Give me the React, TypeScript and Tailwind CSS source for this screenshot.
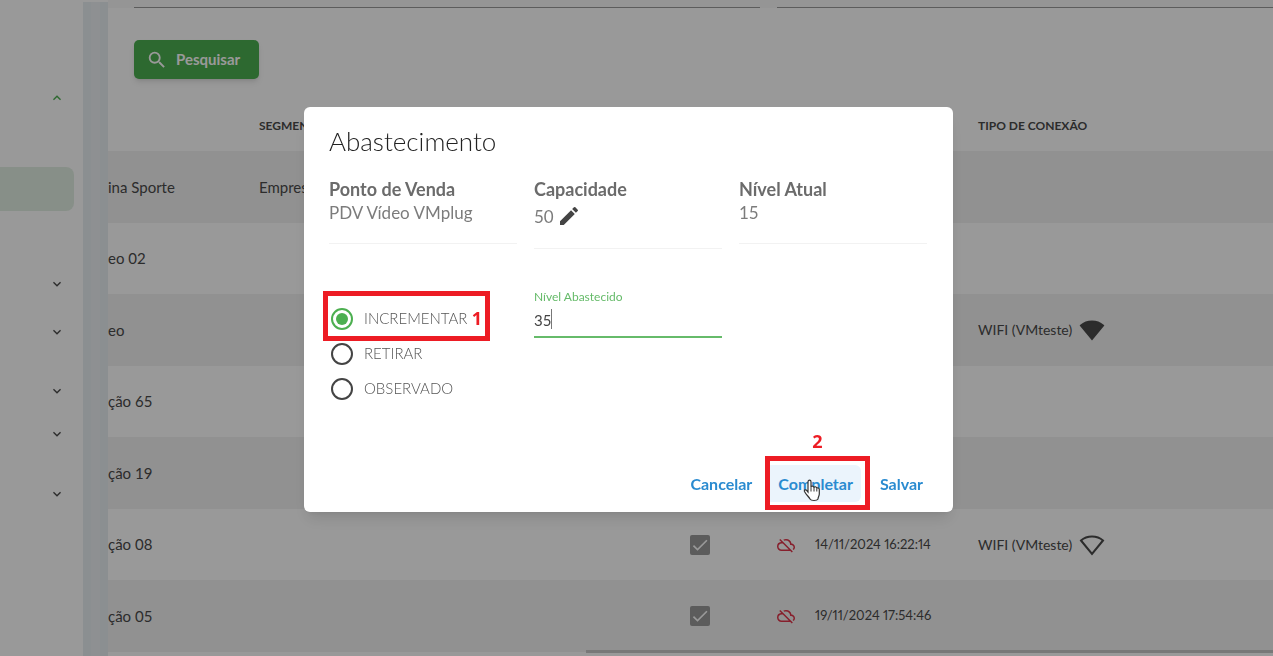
import { useState } from "react";
import {
  MdCheck,
  MdEdit,
  MdExpandLess,
  MdExpandMore,
  MdOutlineCloudOff,
  MdSearch,
} from "react-icons/md";

interface Maquina {
  id: number;
  nome: string;
  segmento?: string;
  telemetria?: string;
  conexao?: string;
  sinal?: "forte" | "fraco";
}

const maquinas: Maquina[] = [
  { id: 1, nome: "ina Sporte", segmento: "Empresa" },
  { id: 2, nome: "eo 02" },
  { id: 3, nome: "eo", conexao: "WIFI (VMteste)", sinal: "forte" },
  { id: 4, nome: "ção 65" },
  { id: 5, nome: "ção 19" },
  {
    id: 6,
    nome: "ção 08",
    telemetria: "14/11/2024 16:22:14",
    conexao: "WIFI (VMteste)",
    sinal: "fraco",
  },
  { id: 7, nome: "ção 05", telemetria: "19/11/2024 17:54:46" },
];

const operacoes = ["INCREMENTAR", "RETIRAR", "OBSERVADO"];

function SinalWifi({ cheio }: { cheio: boolean }) {
  return (
    <svg width="26" height="22" viewBox="0 0 26 22" className="shrink-0">
      <path
        d="M2 6.5C5 3.8 9 2.5 13 2.5S21 3.8 24 6.5L13 20Z"
        fill={cheio ? "#4a4a4a" : "none"}
        stroke="#4a4a4a"
        strokeWidth="2"
      />
    </svg>
  );
}

function Sidebar() {
  return (
    <nav className="flex w-[83px] shrink-0 flex-col bg-white pt-[74px] text-[#4a4a4a]">
      <button aria-label="Recolher menu" className="flex h-12 items-center pl-[49px] text-[#4caf50]">
        <MdExpandLess size={16} />
      </button>
      <a href="#" aria-label="Abastecimento" className="mt-[45px] mb-[49px] mr-[9px] h-11 rounded-r-lg bg-[#e2efe3]" />
      <button aria-label="Expandir menu 1" className="flex h-12 items-center pl-[49px]">
        <MdExpandMore size={16} />
      </button>
      <button aria-label="Expandir menu 2" className="mb-[11px] flex h-12 items-center pl-[49px]">
        <MdExpandMore size={16} />
      </button>
      <button aria-label="Expandir menu 3" className="flex h-12 items-center pl-[49px]">
        <MdExpandMore size={16} />
      </button>
      <button aria-label="Expandir menu 4" className="mb-[22px] flex h-[38px] items-center pl-[49px]">
        <MdExpandMore size={16} />
      </button>
      <button aria-label="Expandir menu 5" className="flex h-[38px] items-center pl-[49px]">
        <MdExpandMore size={16} />
      </button>
    </nav>
  );
}

function TabelaMaquinas() {
  return (
    <table className="w-full table-fixed text-left text-[15px] text-[#4a4a4a]">
      <colgroup>
        <col className="w-[151px]" />
        <col />
        <col className="w-[87px]" />
        <col className="w-[38px]" />
        <col className="w-[163px]" />
        <col className="w-[293px]" />
        <col className="w-[2px]" />
      </colgroup>
      <thead>
        <tr className="h-[51px] text-xs">
          <td />
          <th>SEGMENTO</th>
          <td />
          <td />
          <td />
          <th>TIPO DE CONEXÃO</th>
          <td />
        </tr>
      </thead>
      <tbody>
        {maquinas.map((item) => (
          <tr key={item.id} className="h-[71px] odd:h-[72px] odd:bg-[#f2f2f2]">
            <td className="whitespace-nowrap">{item.nome}</td>
            <td>{item.segmento}</td>
            <td>
              {item.telemetria && (
                <label className="grid w-5">
                  <input
                    type="checkbox"
                    defaultChecked
                    aria-label={`Ativo ${item.nome}`}
                    className="col-start-1 row-start-1 size-5 appearance-none rounded-xs bg-[#9a9a9a]"
                  />
                  <MdCheck size={20} className="pointer-events-none col-start-1 row-start-1 text-white" />
                </label>
              )}
            </td>
            <td>{item.telemetria && <MdOutlineCloudOff size={18} className="text-[#e0344a]" />}</td>
            <td className="text-[13px] whitespace-nowrap proportional-nums">{item.telemetria}</td>
            <td className="text-sm">
              {item.conexao && (
                <span className="flex items-center gap-[7px] whitespace-nowrap">
                  {item.conexao}
                  <SinalWifi cheio={item.sinal === "forte"} />
                </span>
              )}
            </td>
            <td />
          </tr>
        ))}
      </tbody>
    </table>
  );
}

function ModalAbastecimento() {
  const [operacao, setOperacao] = useState("INCREMENTAR");
  const [nivel, setNivel] = useState("35");

  return (
    <div className="fixed inset-0 flex items-start justify-center bg-black/40 pt-[107px] pr-4">
      <div
        role="dialog"
        aria-labelledby="titulo-modal"
        className="w-[649px] max-w-full rounded-md bg-white pt-[18px] pr-[26px] pb-[10px] pl-[25px] text-[#7c7c7c] shadow-lg"
      >
        <h2 id="titulo-modal" className="text-[26px] leading-8 font-light text-[#222]">
          Abastecimento
        </h2>

        <div className="mt-5 grid grid-cols-3 items-start gap-[17px] leading-6">
          <div className="border-b border-[#f2f2f2] pb-[18px]">
            <h3 className="text-lg leading-6 font-bold text-[#6b6b6b]">Ponto de Venda</h3>
            <p className="text-[17px]">PDV Vídeo VMplug</p>
          </div>
          <div className="border-b border-[#f2f2f2] pb-[15px]">
            <h3 className="text-lg leading-6 font-bold text-[#6b6b6b]">Capacidade</h3>
            <p className="flex h-8 items-center gap-[3px] text-[17px]">
              50
              <button aria-label="Editar capacidade" className="pb-[2px] text-[#444]">
                <MdEdit size={24} />
              </button>
            </p>
          </div>
          <div className="border-b border-[#f2f2f2] pb-[18px]">
            <h3 className="text-lg leading-6 font-bold text-[#6b6b6b]">Nível Atual</h3>
            <p className="text-[17px]">15</p>
          </div>
        </div>

        <div className="mt-10 grid grid-cols-3 gap-[17px]">
          <fieldset aria-label="Operação" className="relative pt-3">
            {operacoes.map((item) => (
              <label key={item} className="flex h-[35px] items-center gap-[11px] pl-[2px] text-[15px] font-light text-[#555]">
                <span className="grid size-[22px] place-items-center">
                  <input
                    type="radio"
                    name="operacao"
                    value={item}
                    checked={operacao === item}
                    onChange={() => setOperacao(item)}
                    className="peer col-start-1 row-start-1 size-[22px] appearance-none rounded-full border-2 border-[#444] checked:border-[#4caf50]"
                  />
                  <span className="pointer-events-none col-start-1 row-start-1 size-3 rounded-full peer-checked:bg-[#4caf50]" />
                </span>
                {item}
              </label>
            ))}
            <div className="pointer-events-none absolute top-[2px] -left-[6px] flex h-[50px] w-[167px] items-center justify-end border-5 border-[#ed1c24] pt-1 pr-[3px] font-['Open_Sans'] text-lg font-bold text-[#ed1c24]">
              1
            </div>
          </fieldset>

          <div className="relative">
            <label htmlFor="nivel" className="block text-xs leading-4 text-[#66bb6a]">
              Nível Abastecido
            </label>
            <input
              id="nivel"
              value={nivel}
              onChange={(e) => setNivel(e.target.value)}
              className="block h-[33px] w-full border-b-2 border-[#66bb6a] pb-[2px] text-[15px] text-[#444] outline-none"
            />
            <span className="absolute top-5 left-[17px] h-5 w-px bg-[#777]" />
          </div>
        </div>

        <div className="-mr-[9px] mt-[59px] flex justify-end text-base font-bold text-[#2a8bd0]">
          <button className="h-[37px] px-[13px]">Cancelar</button>
          <div className="relative">
            <button className="h-[37px] rounded-md bg-[#ebf4fc] pr-2 pl-[13px]">Completar</button>
            <div className="pointer-events-none absolute -top-[9px] left-0 h-[54px] w-[105px] border-5 border-[#ed1c24]" />
            <span className="absolute -top-[38px] left-[47px] font-['Open_Sans'] text-lg text-[#ed1c24]">2</span>
            <svg
              width="18"
              height="23"
              viewBox="0 0 18 23"
              className="pointer-events-none absolute top-[14px] left-[38px]"
            >
              <path
                d="M5 13V3C5 .5 8 .5 8 3v5.500c0-2 3-2 3 .5 0-2 2.800-1.500 2.800.8 0-1.500 2.500-1.200 2.500.7V15c0 2-1.300 3-1.300 5-1 2-7 2-8 0C6 18 3 15.500 1.500 12.500.7 10.800 3 10.200 4 11.800Z"
                fill="#fff"
                stroke="#333"
                strokeWidth="1.200"
              />
              <path d="M8 8.500v4M11 9v3.500M13.800 10v2.500" stroke="#333" />
            </svg>
          </div>
          <button className="ml-[6px] h-[37px] px-[13px]">Salvar</button>
        </div>
      </div>
    </div>
  );
}

export default function App() {
  return (
    <div className="flex min-h-screen overflow-hidden bg-white font-[Lato,sans-serif]">
      <Sidebar />
      <div className="mt-[2px] w-[25px] shrink-0 border-x-8 border-[#e8eef2] bg-[#edf1f4]" />
      <main className="min-w-0 flex-1 overflow-hidden">
        <div className="flex gap-[17px] bg-[#f8f8f8] pl-[26px]">
          <input aria-label="Ponto de venda" className="h-2 w-[55%] shrink-0 border-b border-[#999]" />
          <input aria-label="Segmento" className="h-2 w-[55%] shrink-0 border-b border-[#999]" />
        </div>
        <button className="mt-8 mb-[21px] ml-[26px] flex h-[39px] w-[125px] items-center gap-2 rounded-[5px] bg-[#4caf50] pl-3 text-[15px] font-bold text-white shadow-md">
          <MdSearch size={22} />
          Pesquisar
        </button>
        <TabelaMaquinas />
        <div className="-mt-[2px] flex justify-end">
          <div className="h-[3px] w-[59%] bg-[#c8c8c8]" />
        </div>
      </main>
      <ModalAbastecimento />
    </div>
  );
}
